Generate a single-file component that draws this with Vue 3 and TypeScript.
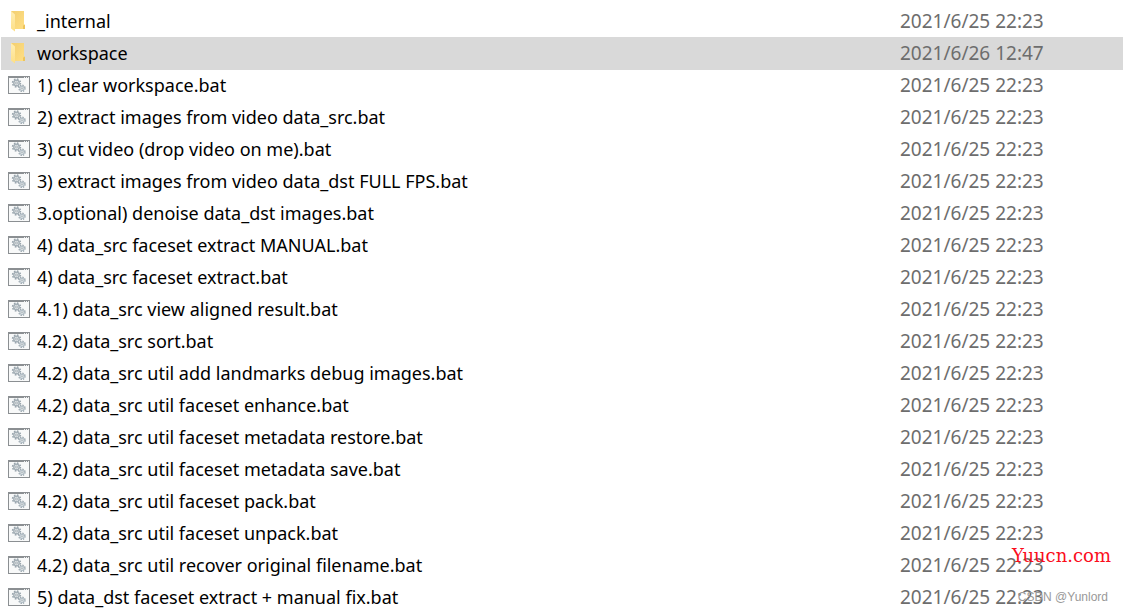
<script setup lang="ts">
interface Entry {
  name: string
  modified: string
  kind: 'folder' | 'batch'
  selected?: boolean
}

const folders: Entry[] = [
  { name: '_internal', modified: '2021/6/25 22:23', kind: 'folder' },
  { name: 'workspace', modified: '2021/6/26 12:47', kind: 'folder', selected: true },
]

const scripts: string[] = [
  '1) clear workspace.bat',
  '2) extract images from video data_src.bat',
  '3) cut video (drop video on me).bat',
  '3) extract images from video data_dst FULL FPS.bat',
  '3.optional) denoise data_dst images.bat',
  '4) data_src faceset extract MANUAL.bat',
  '4) data_src faceset extract.bat',
  '4.1) data_src view aligned result.bat',
  '4.2) data_src sort.bat',
  '4.2) data_src util add landmarks debug images.bat',
  '4.2) data_src util faceset enhance.bat',
  '4.2) data_src util faceset metadata restore.bat',
  '4.2) data_src util faceset metadata save.bat',
  '4.2) data_src util faceset pack.bat',
  '4.2) data_src util faceset unpack.bat',
  '4.2) data_src util recover original filename.bat',
  '5) data_dst faceset extract + manual fix.bat',
]

const entries: Entry[] = [
  ...folders,
  ...scripts.map((name): Entry => ({ name, modified: '2021/6/25 22:23', kind: 'batch' })),
]
</script>

<template>
  <main class="explorer">
    <svg class="defs" width="0" height="0" aria-hidden="true">
      <defs>
        <linearGradient id="folder-body" x1="0" y1="0" x2="1" y2="1">
          <stop offset="0" stop-color="#f3cf70" />
          <stop offset="1" stop-color="#ffdf86" />
        </linearGradient>
        <linearGradient id="folder-flap" x1="0" y1="0" x2="0" y2="1">
          <stop offset="0" stop-color="#ffeeb4" />
          <stop offset="1" stop-color="#fddf86" />
        </linearGradient>
      </defs>
    </svg>
    <table class="files">
      <tbody>
        <tr v-for="entry in entries" :key="entry.name" :class="{ selected: entry.selected }">
          <td class="icon">
            <svg v-if="entry.kind === 'folder'" viewBox="0 0 22 22" width="22" height="22" aria-hidden="true">
              <path d="M3 1H16V14.5L17 15V19H6Z" fill="url(#folder-body)" />
              <path d="M16 14.5L17 15V19H15V16Z" fill="#edc45c" />
              <path d="M3 1L7 4.5V21.5L3 18.5Z" fill="url(#folder-flap)" />
            </svg>
            <svg v-else viewBox="0 0 22 22" width="22" height="22" aria-hidden="true">
              <rect x="0.5" y="2.5" width="21" height="17" fill="#f8f9f9" stroke="#8b8f92" />
              <path d="M0 3H22" stroke="#8b8f92" stroke-width="2" />
              <path d="M16 3.5H17M18 3.5H19M20 3.5H21" stroke="#eef0f1" />
              <g fill="none" stroke="#98a4ac">
                <circle cx="8.5" cy="9" r="3.9" stroke-width="1.6" stroke-dasharray="1.6 1.46" />
                <circle cx="8.5" cy="9" r="2.7" stroke="#a5b0b7" stroke-width="1.5" />
                <circle cx="8.5" cy="9" r="1" stroke="#8b989f" stroke-width="0.8" />
                <circle cx="14" cy="14.3" r="3" stroke-width="1.5" stroke-dasharray="1.3 1.06" />
                <circle cx="14" cy="14.3" r="2.1" stroke="#afbcc4" stroke-width="1.1" />
                <circle cx="14" cy="14.3" r="0.7" stroke-width="0.8" />
              </g>
            </svg>
          </td>
          <td class="name">{{ entry.name }}</td>
          <td class="date">{{ entry.modified }}</td>
        </tr>
      </tbody>
    </table>
    <span class="site-mark">Yuucn.com</span>
    <span class="author-mark">CSDN @Yunlord</span>
  </main>
</template>

<style>
body {
  background: #fff;
  overflow: hidden;
}
</style>

<style scoped>
.explorer {
  position: relative;
  padding: 5px 0 0 1px;
  font-family: 'Noto Sans', 'Open Sans', sans-serif;
  color: #000;
}

.defs {
  position: absolute;
}

.files {
  width: 100%;
  border-collapse: collapse;
  table-layout: fixed;
}

td {
  height: 32px;
  padding: 0;
  line-height: 32px;
  white-space: nowrap;
}

.selected {
  background: #d9d9d9;
  box-shadow: 0 1px 0 #d9d9d9;
}

.icon {
  width: 36px;
}

.icon svg {
  display: block;
  margin-left: 7px;
}

.name {
  font-size: 18px;
}

.date {
  width: 223px;
  font-size: 19px;
  color: #6d6d6d;
}

.site-mark {
  position: absolute;
  right: 12px;
  bottom: 47px;
  font-family: 'DejaVu Serif', serif;
  font-size: 18px;
  line-height: 20px;
  color: #fb0d1b;
}

.author-mark {
  position: absolute;
  right: 15px;
  bottom: 9px;
  font-family: 'Liberation Sans', Arial, sans-serif;
  font-size: 12px;
  line-height: 14px;
  color: #999;
}
</style>
